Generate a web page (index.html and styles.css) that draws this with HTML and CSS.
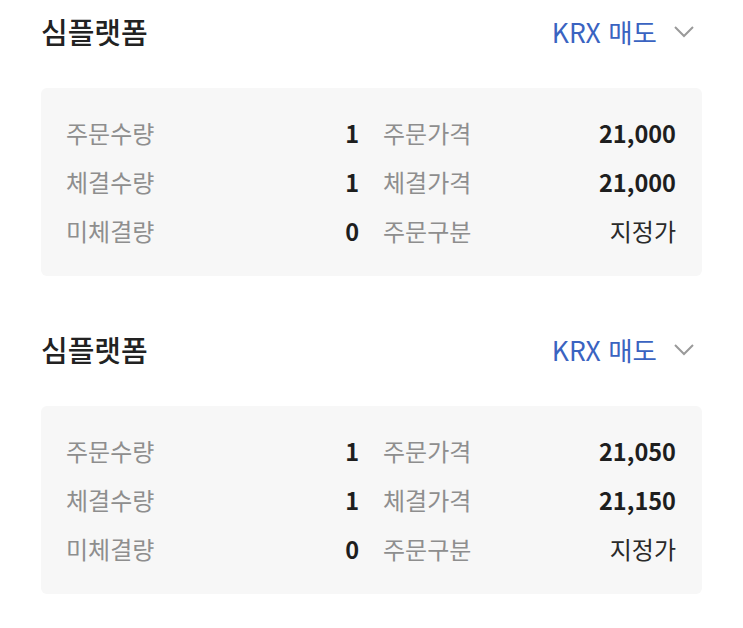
FILE: index.html
```html
<!DOCTYPE html>
<html lang="ko">
<head>
<meta charset="utf-8">
<link rel="stylesheet" href="styles.css">
</head>
<body>
<div class="page">
  <section class="order">
    <div class="head">
      <h2 class="title">심플랫폼</h2>
      <div class="side">
        <span class="market">KRX 매도</span>
        <svg class="chev" width="22" height="14" viewBox="0 0 22 14"><path d="M2 2 L11 11 L20 2" fill="none" stroke="#9a9a9a" stroke-width="2"/></svg>
      </div>
    </div>
    <div class="card">
      <div class="col">
        <div class="row"><span class="lbl">주문수량</span><span class="val">1</span></div>
        <div class="row"><span class="lbl">체결수량</span><span class="val">1</span></div>
        <div class="row"><span class="lbl">미체결량</span><span class="val">0</span></div>
      </div>
      <div class="col">
        <div class="row"><span class="lbl">주문가격</span><span class="val">21,000</span></div>
        <div class="row"><span class="lbl">체결가격</span><span class="val">21,000</span></div>
        <div class="row"><span class="lbl">주문구분</span><span class="val plain">지정가</span></div>
      </div>
    </div>
  </section>
  <section class="order">
    <div class="head">
      <h2 class="title">심플랫폼</h2>
      <div class="side">
        <span class="market">KRX 매도</span>
        <svg class="chev" width="22" height="14" viewBox="0 0 22 14"><path d="M2 2 L11 11 L20 2" fill="none" stroke="#9a9a9a" stroke-width="2"/></svg>
      </div>
    </div>
    <div class="card">
      <div class="col">
        <div class="row"><span class="lbl">주문수량</span><span class="val">1</span></div>
        <div class="row"><span class="lbl">체결수량</span><span class="val">1</span></div>
        <div class="row"><span class="lbl">미체결량</span><span class="val">0</span></div>
      </div>
      <div class="col">
        <div class="row"><span class="lbl">주문가격</span><span class="val">21,050</span></div>
        <div class="row"><span class="lbl">체결가격</span><span class="val">21,150</span></div>
        <div class="row"><span class="lbl">주문구분</span><span class="val plain">지정가</span></div>
      </div>
    </div>
  </section>
</div>
</body>
</html>
```
FILE: styles.css
```css
html, body {
  margin: 0;
  padding: 0;
  background: #ffffff;
}
body {
  font-family: "Noto Sans CJK KR", "Noto Sans", sans-serif;
  color: #222;
}
.page {
  padding: 0 41px;
}
.order + .order {
  margin-top: 42px;
}
.head {
  height: 63px;
  display: flex;
  align-items: center;
  justify-content: space-between;
  margin-bottom: 25px;
}
.title {
  margin: 0 0 0 0;
  font-size: 29px;
  font-weight: 500;
  color: #222222;
  line-height: 1;
}
.side {
  display: flex;
  align-items: center;
  gap: 16px;
  padding-right: 7px;
}
.market {
  font-size: 26.5px;
  color: #3a63c1;
  font-weight: 400;
}
.chev {
  display: block;
}
.card {
  background: #f7f7f7;
  border-radius: 6px;
  padding: 20px 26px 21px 25px;
  display: grid;
  grid-template-columns: 1fr 1fr;
  column-gap: 24px;
}
.row {
  height: 49px;
  display: flex;
  align-items: center;
  justify-content: space-between;
  font-size: 24px;
}
.lbl {
  color: #8e8e8e;
}
.val {
  color: #1e1e1e;
  font-weight: 700;
  font-size: 23.5px;
}
.val.plain {
  font-weight: 400;
  color: #2a2a2a;
  font-size: 24px;
}
```
